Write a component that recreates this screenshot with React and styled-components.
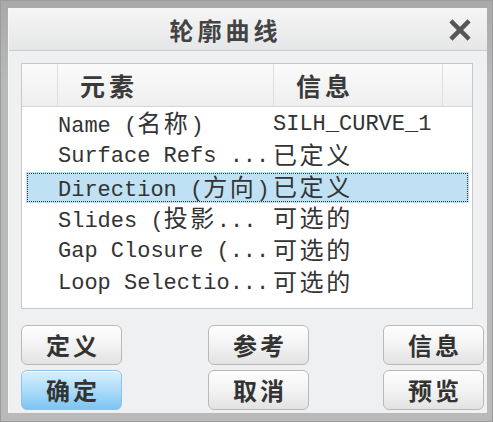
import React from "react";
import styled, { createGlobalStyle } from "styled-components";

const Global = createGlobalStyle`
  html, body { margin: 0; padding: 0; background: #b8b8b8; }
  body { font-family: "Noto Sans CJK SC", "Noto Sans", sans-serif; }
  * { box-sizing: border-box; }
`;

const Frame = styled.div`
  width: 493px;
  height: 422px;
  padding: 8px 8px 9px 8px;
  background: linear-gradient(#a9a9a9, #b9b9b9 20%, #b9b9b9);
  border: 1px solid #9c9c9c;
  display: flex;
`;

const Window = styled.div`
  flex: 1;
  display: flex;
  flex-direction: column;
  background: #eef0f2;
  border-left: 1px solid #f6f6f6;
  border-top: 1px solid #f6f6f6;
  margin: -1px;
`;

const TitleBar = styled.div`
  height: 43px;
  display: flex;
  align-items: center;
  background: linear-gradient(#f5f5f5, #e5e6e7);
  border-bottom: 1px solid #c9cbcd;
`;

const Title = styled.div`
  flex: 1;
  text-align: center;
  font-size: 24px;
  font-weight: 700;
  letter-spacing: 4px;
  color: #434343;
  padding-left: 4px;
`;

const Close = styled.div`
  width: 44px;
  margin-right: 5px;
  display: flex;
  justify-content: center;
  align-items: center;
`;

const Body = styled.div`
  flex: 1;
  display: flex;
  flex-direction: column;
  padding: 12px 3px 3px 12px;
`;

const ListBox = styled.div`
  width: 452px;
  height: 246px;
  background: #fff;
  border: 1px solid #c6c8ca;
  display: flex;
  flex-direction: column;
`;

const Header = styled.div`
  height: 43px;
  flex: none;
  display: grid;
  grid-template-columns: 36px 216px 169px 1fr;
  background: linear-gradient(#fbfbfb, #eeeeee);
  border-bottom: 1px solid #d4d4d4;
`;

const HeadCell = styled.div`
  display: flex;
  align-items: center;
  padding-left: 22px;
  font-size: 25px;
  font-weight: 700;
  letter-spacing: 4px;
  color: #3a3a3a;
  border-right: ${(p) => (p.$last ? "none" : "1px solid #dedede")};
`;

const Rows = styled.div`
  display: flex;
  flex-direction: column;
  padding: 1px 3px 0 4px;
`;

const Row = styled.div`
  height: 31.8px;
  flex: none;
  display: flex;
  padding: 2px 0 0 32px;
  font-family: "Liberation Mono", "Noto Sans CJK SC", monospace;
  font-size: 22px;
  line-height: 29.8px;
  color: #333;
  white-space: pre;
  background: ${(p) => (p.$selected ? "#bfe1f3" : "transparent")};
  outline: ${(p) => (p.$selected ? "1.5px dotted #333" : "none")};
  outline-offset: -2px;
`;

const NameCell = styled.div`
  width: 215px;
  flex: none;
`;

const InfoCell = styled.div``;

const Wide = styled.span`
  font-family: "Noto Sans CJK SC", sans-serif;
  font-size: 24px;
  line-height: 1;
  letter-spacing: 2.6px;
`;

const Buttons = styled.div`
  margin-top: 16px;
  display: grid;
  grid-template-columns: 101px 86px 101px 74px 101px;
  grid-template-rows: 40px 40px;
  row-gap: 5px;
`;

const Button = styled.button`
  grid-column: ${(p) => p.$col};
  margin: 0;
  padding: 0 0 2px 0;
  border: 1px solid ${(p) => (p.$primary ? "#8fc3e6" : "#b9b9b9")};
  border-radius: 6px;
  background: ${(p) =>
    p.$primary
      ? "linear-gradient(#d9f0fd, #a8daf8 55%, #7dc4f1)"
      : "linear-gradient(#fefefe, #f3f3f3 50%, #e2e2e2)"};
  box-shadow: inset 0 1px 0 rgba(255,255,255,0.9);
  font-family: "Noto Sans CJK SC", sans-serif;
  font-size: 24px;
  font-weight: 700;
  letter-spacing: 3px;
  text-indent: 3px;
  color: #333;
`;

const renderText = (s) =>
  s.split(/([\u3400-\u9fff\uff00-\uffef]+)/).map((part, i) =>
    /[\u3400-\u9fff\uff00-\uffef]/.test(part) ? <Wide key={i}>{part}</Wide> : part
  );

const rows = [
  ["Name (名称)", "SILH_CURVE_1"],
  ["Surface Refs ...", "已定义"],
  ["Direction (方向)", "已定义", true],
  ["Slides (投影...", "可选的"],
  ["Gap Closure (...", "可选的"],
  ["Loop Selectio...", "可选的"],
];

export default function App() {
  return (
    <>
      <Global />
      <Frame>
        <Window>
          <TitleBar>
            <Title>轮廓曲线</Title>
            <Close>
              <svg width="22" height="22" viewBox="0 0 22 22">
                <path d="M3.5 3.5 L18.5 18.5 M18.5 3.5 L3.5 18.5" stroke="#555" strokeWidth="4.5" strokeLinecap="square" />
              </svg>
            </Close>
          </TitleBar>
          <Body>
            <ListBox>
              <Header>
                <HeadCell />
                <HeadCell>元素</HeadCell>
                <HeadCell>信息</HeadCell>
                <HeadCell $last />
              </Header>
              <Rows>
                {rows.map(([n, v, sel]) => (
                  <Row key={n} $selected={sel}>
                    <NameCell>{renderText(n)}</NameCell>
                    <InfoCell>{renderText(v)}</InfoCell>
                  </Row>
                ))}
              </Rows>
            </ListBox>
            <Buttons>
              <Button $col={1}>定义</Button>
              <Button $col={3}>参考</Button>
              <Button $col={5}>信息</Button>
              <Button $col={1} $primary>确定</Button>
              <Button $col={3}>取消</Button>
              <Button $col={5}>预览</Button>
            </Buttons>
          </Body>
        </Window>
      </Frame>
    </>
  );
}
